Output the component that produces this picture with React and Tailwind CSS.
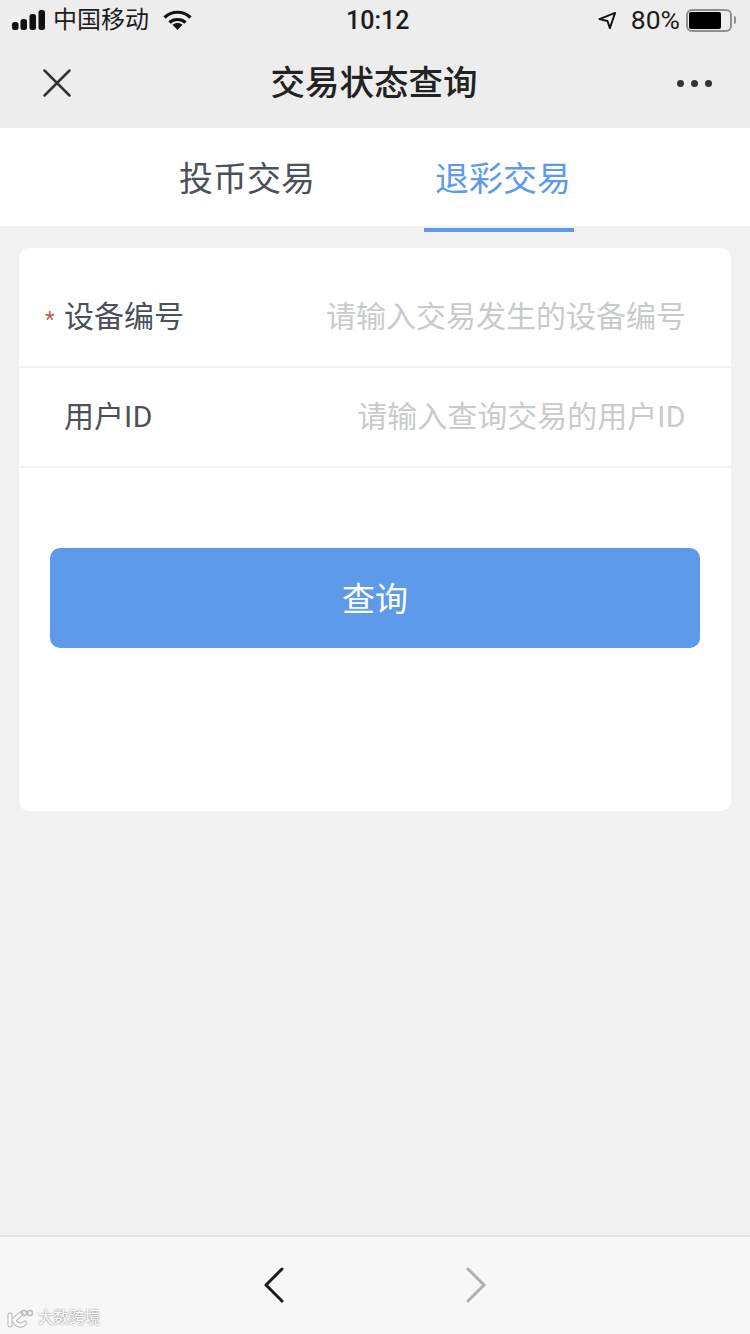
import React from "react";

const FONT = "font-['Roboto','Noto_Sans_CJK_SC',sans-serif]";

const StatusBar = () => (
  <div className="relative flex h-10 items-center justify-between pl-3 pr-[14px] text-[#1c1c1c]">
    <div className="flex items-center">
      <svg width="34" height="22" viewBox="0 0 34 22" fill="#111">
        <rect x="0" y="13" width="6.500" height="8" rx="2.500" />
        <rect x="8.500" y="10" width="6.500" height="11" rx="2.500" />
        <rect x="17.500" y="5" width="6.500" height="16" rx="2.500" />
        <rect x="26.500" y="1" width="6.500" height="20" rx="2.500" />
      </svg>
      <span className="ml-[7px] text-[24px] leading-none">中国移动</span>
      <svg className="ml-[14px]" width="29" height="20" viewBox="0 0 29 20" fill="none" stroke="#111" strokeWidth="3.200">
        <path d="M1.500 7.500C8.500.500 20.500.500 27.500 7.500" />
        <path d="M6.500 12.500C10.500 8.500 18.500 8.500 22.500 12.500" />
        <path d="M9.500 14.800c2.800-2.400 7.200-2.400 10 0L14.500 20z" fill="#111" stroke="none" />
      </svg>
    </div>
    <span className="absolute left-[346px] top-[7px] text-[25px] font-medium leading-[28px]">10:12</span>
    <div className="flex items-center">
      <svg width="19" height="19" viewBox="0 0 20 20" fill="none" stroke="#111" strokeWidth="2" strokeLinejoin="round">
        <path d="M1.500 8.500 18 2l-5.500 16-2.500-7.500z" />
      </svg>
      <span className="ml-[14px] text-[26.500px] leading-none">80%</span>
      <div className="ml-[6px] flex h-[23px] w-[46px] items-center rounded-[6px] border-2 border-[#8f8f8f] p-[1px]">
        <div className="h-full w-[32px] rounded-[2px] bg-black" />
      </div>
      <div className="ml-[2px] h-[8px] w-[2px] rounded-r-sm bg-[#8f8f8f]" />
    </div>
  </div>
);

const NavBar = () => (
  <div className="flex h-[88px] items-center justify-between pb-[2px] pl-[43px] pr-[38px]">
    <svg width="28" height="28" viewBox="0 0 28 28" stroke="#333" strokeWidth="2.500" strokeLinecap="round">
      <path d="M1.500 1.500 26.500 26.500M26.500 1.500 1.500 26.500" />
    </svg>
    <h1 className="text-[34.500px] font-medium leading-none text-[#222]">交易状态查询</h1>
    <div className="flex gap-[7px]">
      <span className="h-[7px] w-[7px] rounded-full bg-[#333]" />
      <span className="h-[7px] w-[7px] rounded-full bg-[#333]" />
      <span className="h-[7px] w-[7px] rounded-full bg-[#333]" />
    </div>
  </div>
);

const Tabs = () => (
  <div className="flex h-[98px] items-center bg-white pl-[179px] pt-[4px] text-[34px] leading-none">
    <span className="text-[#4b5059]">投币交易</span>
    <div className="relative ml-[120px] text-[#5d9bea]">
      退彩交易
      <div className="absolute -bottom-[36px] -left-[11px] h-1 w-[150px] bg-[#5d9bea]" />
    </div>
  </div>
);

const FormRow = ({ label, placeholder, required, height }) => (
  <div className={`relative flex items-center justify-between border-b-2 border-[#f1f1f1] pl-[45px] pr-[45px] ${height}`}>
    {required && <span className="absolute left-[26px] top-[61px] text-[22px] leading-none text-[#c9595c]">*</span>}
    <span className="text-[30px] leading-none text-[#4b5059]">{label}</span>
    <span className="text-[30px] leading-none text-[#c8cacd]">{placeholder}</span>
  </div>
);

const App = () => (
  <div className={`relative flex h-[1334px] w-[750px] flex-col overflow-hidden bg-[#f1f1f1] ${FONT}`}>
    <div className="bg-[#ededed]">
      <StatusBar />
      <NavBar />
    </div>
    <Tabs />

    <div className="flex-1 px-[19px] pt-[22px]">
      <div className="h-[563px] rounded-[10px] bg-white">
        <FormRow label="设备编号" placeholder="请输入交易发生的设备编号" required height="h-[120px] pt-[20px]" />
        <FormRow
          label={<>用户<span className="tracking-[0.5px]">ID</span></>}
          placeholder={<>请输入查询交易的用户<span className="tracking-[0.5px]">ID</span></>}
          height="h-[100px]"
        />
        <div className="px-[31px] pt-[80px]">
          <button className="flex h-[100px] w-full items-center justify-center rounded-[10px] bg-[#5d9bea] pt-[2px] text-[33px] leading-none text-white">
            查询
          </button>
        </div>
      </div>
    </div>

    <div className="relative flex h-[99px] items-center justify-center gap-[182px] border-t-2 border-[#e2e2e2] bg-[#f7f7f7] pb-[1px]">
      <svg width="20" height="36" viewBox="0 0 20 36" fill="none" stroke="#1a1a1a" strokeWidth="3" strokeLinecap="round" strokeLinejoin="round">
        <path d="M18 2 2 18l16 16" />
      </svg>
      <svg width="20" height="36" viewBox="0 0 20 36" fill="none" stroke="#b0b0b0" strokeWidth="3" strokeLinecap="round" strokeLinejoin="round">
        <path d="M2 2l16 16L2 34" />
      </svg>
      <div className="absolute bottom-[5px] left-[7px] flex items-center gap-[4px] text-[15.500px] leading-none text-white [text-shadow:0_0_2px_#666]">
        <svg width="27" height="20" viewBox="0 0 27 20" fill="none" strokeLinecap="round">
          <g stroke="#b5b5b5" strokeWidth="5">
            <path d="M3 6v10M14 5c-4 3-6 5-7 6 2 5 7 7 11 3" />
          </g>
          <g stroke="#fff" strokeWidth="3">
            <path d="M3 6v10M14 5c-4 3-6 5-7 6 2 5 7 7 11 3" />
          </g>
          <circle cx="17" cy="4" r="2.500" stroke="#bbb" strokeWidth="1.500" />
          <circle cx="23" cy="4" r="2.500" stroke="#bbb" strokeWidth="1.500" />
        </svg>
        <span>大数跨境</span>
      </div>
    </div>
  </div>
);

export default App;
